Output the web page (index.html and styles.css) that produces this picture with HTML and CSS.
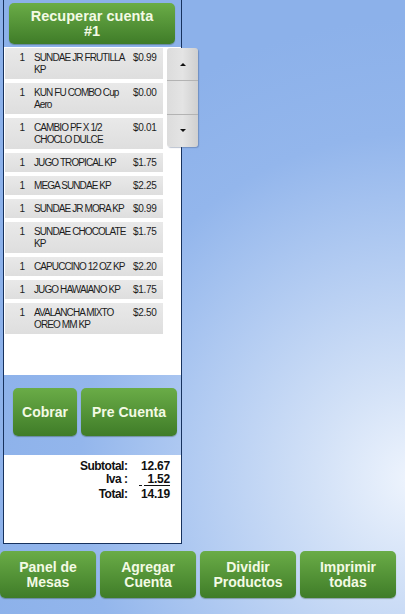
FILE: index.html
```html
<!DOCTYPE html>
<html>
<head>
<meta charset="utf-8">
<link rel="stylesheet" href="styles.css">
</head>
<body>
<div class="panel">
  <div class="head">
    <button class="btn recover">Recuperar cuenta<br>#1</button>
  </div>
  <div class="list">
    <div class="row"><span class="qty">1</span><span class="name">SUNDAE JR FRUTILLA KP</span><span class="price">$0.99</span></div>
    <div class="row"><span class="qty">1</span><span class="name">KUN FU COMBO Cup Aero</span><span class="price">$0.00</span></div>
    <div class="row"><span class="qty">1</span><span class="name">CAMBIO PF X 1/2 CHOCLO DULCE</span><span class="price">$0.01</span></div>
    <div class="row"><span class="qty">1</span><span class="name">JUGO TROPICAL KP</span><span class="price">$1.75</span></div>
    <div class="row"><span class="qty">1</span><span class="name">MEGA SUNDAE KP</span><span class="price">$2.25</span></div>
    <div class="row"><span class="qty">1</span><span class="name">SUNDAE JR MORA KP</span><span class="price">$0.99</span></div>
    <div class="row"><span class="qty">1</span><span class="name">SUNDAE CHOCOLATE KP</span><span class="price">$1.75</span></div>
    <div class="row"><span class="qty">1</span><span class="name">CAPUCCINO 12 OZ KP</span><span class="price">$2.20</span></div>
    <div class="row"><span class="qty">1</span><span class="name">JUGO HAWAIANO KP</span><span class="price">$1.75</span></div>
    <div class="row"><span class="qty">1</span><span class="name">AVALANCHA MIXTO OREO MM KP</span><span class="price">$2.50</span></div>
  </div>
  <div class="actions">
    <button class="btn cobrar">Cobrar</button>
    <button class="btn pre">Pre Cuenta</button>
  </div>
  <div class="totals">
    <div class="tgrid">
      <span class="lbl">Subtotal:</span><span class="val">12.67</span>
      <span class="lbl">Iva :</span><span class="val iva"><span class="dash"></span><span class="ul">1.52</span></span>
      <span class="lbl">Total:</span><span class="val">14.19</span>
    </div>
  </div>
  <div class="scroller">
    <div class="seg"><svg width="8" height="5" viewBox="0 0 8 5"><path d="M4 1 L7 4 L1 4 Z" fill="#111"/></svg></div>
    <div class="seg"></div>
    <div class="seg"><svg width="8" height="5" viewBox="0 0 8 5"><path d="M1 1 L7 1 L4 4 Z" fill="#111"/></svg></div>
  </div>
</div>
<div class="bottombar">
  <button class="btn big">Panel de<br>Mesas</button>
  <button class="btn big">Agregar<br>Cuenta</button>
  <button class="btn big">Dividir<br>Productos</button>
  <button class="btn big">Imprimir<br>todas</button>
</div>
</body>
</html>
```

FILE: styles.css
```css
html {
  height: 100%;
  background: radial-gradient(ellipse 110% 75% at 102% 78%, #eef4fd 0%, #d2e1f7 22%, #b3ccf2 48%, #93b6ec 75%, #8cb1ea 100%);
}
body {
  margin: 0;
  width: 405px;
  height: 614px;
  overflow: hidden;
  font-family: "Liberation Sans", Arial, sans-serif;
}
.panel {
  position: relative;
  margin-left: 3px;
  width: 177px;
  height: 543px;
  border: 1px solid #17325e;
  border-top: none;
  display: flex;
  flex-direction: column;
}
.btn {
  border: none;
  border-radius: 5px;
  background: linear-gradient(#6aac47, #3f7c28);
  color: #f3fae4;
  font-family: "Liberation Sans", Arial, sans-serif;
  font-weight: bold;
  font-size: 14px;
  line-height: 15px;
  padding: 0;
  box-shadow: 0 1px 1px rgba(30, 60, 20, 0.35);
}
.head {
  height: 47px;
  box-sizing: border-box;
  padding: 3px 0 0 5px;
}
.recover {
  width: 166px;
  height: 41px;
  font-size: 14.5px;
  line-height: 15px;
}
.list {
  background: #fff;
  height: 328px;
  box-sizing: border-box;
  padding: 1px 0 0 1px;
  display: flex;
  flex-direction: column;
  gap: 4px;
}
.row {
  width: 158px;
  box-sizing: border-box;
  padding: 4px 0 3px 0;
  background: linear-gradient(#e9e9e9, #dedede);
  display: flex;
  font-size: 10px;
  line-height: 12px;
  color: #1d1d1d;
}
.qty {
  width: 20px;
  text-align: right;
  flex: none;
}
.name {
  width: 96px;
  margin-left: 9px;
  flex: none;
  letter-spacing: -0.9px;
}
.price {
  margin-left: 3px;
  letter-spacing: -0.3px;
}
.actions {
  height: 80px;
  box-sizing: border-box;
  padding: 13px 0 0 9px;
  display: flex;
  gap: 4px;
}
.cobrar {
  width: 64px;
  height: 48px;
}
.pre {
  width: 96px;
  height: 48px;
}
.totals {
  flex: 1;
  background: #fff;
  display: flex;
  justify-content: flex-end;
  padding: 5px 11px 0 0;
}
.tgrid {
  display: grid;
  grid-template-columns: auto auto;
  column-gap: 12px;
  align-content: start;
  font-size: 12px;
  font-weight: bold;
  line-height: 13px;
  color: #111;
}
.lbl {
  text-align: right;
  letter-spacing: -0.5px;
}
.val {
  text-align: right;
  letter-spacing: -0.2px;
}
.iva {
  padding-bottom: 2px;
}
.dash {
  display: inline-block;
  width: 8px;
  height: 12px;
  border-bottom: 1px dashed #111;
  vertical-align: bottom;
}
.ul {
  display: inline-block;
  border-bottom: 1px solid #111;
  line-height: 12px;
  vertical-align: bottom;
}
.scroller {
  position: absolute;
  left: 163px;
  top: 48px;
  width: 31px;
  height: 99px;
  display: flex;
  flex-direction: column;
  border-radius: 3px;
  box-shadow: 1px 1px 1px rgba(60, 80, 120, 0.35);
  overflow: hidden;
}
.seg {
  flex: 1;
  background: linear-gradient(90deg, #dcdcdc, #e4e4e4 50%, #cfcfcf);
  border-bottom: 1px solid #b3b3b3;
  display: flex;
  align-items: center;
  justify-content: center;
}
.seg:last-child {
  border-bottom: none;
}
.bottombar {
  margin-top: 7px;
  display: flex;
  gap: 4px;
}
.big {
  width: 96px;
  height: 47px;
}
```
